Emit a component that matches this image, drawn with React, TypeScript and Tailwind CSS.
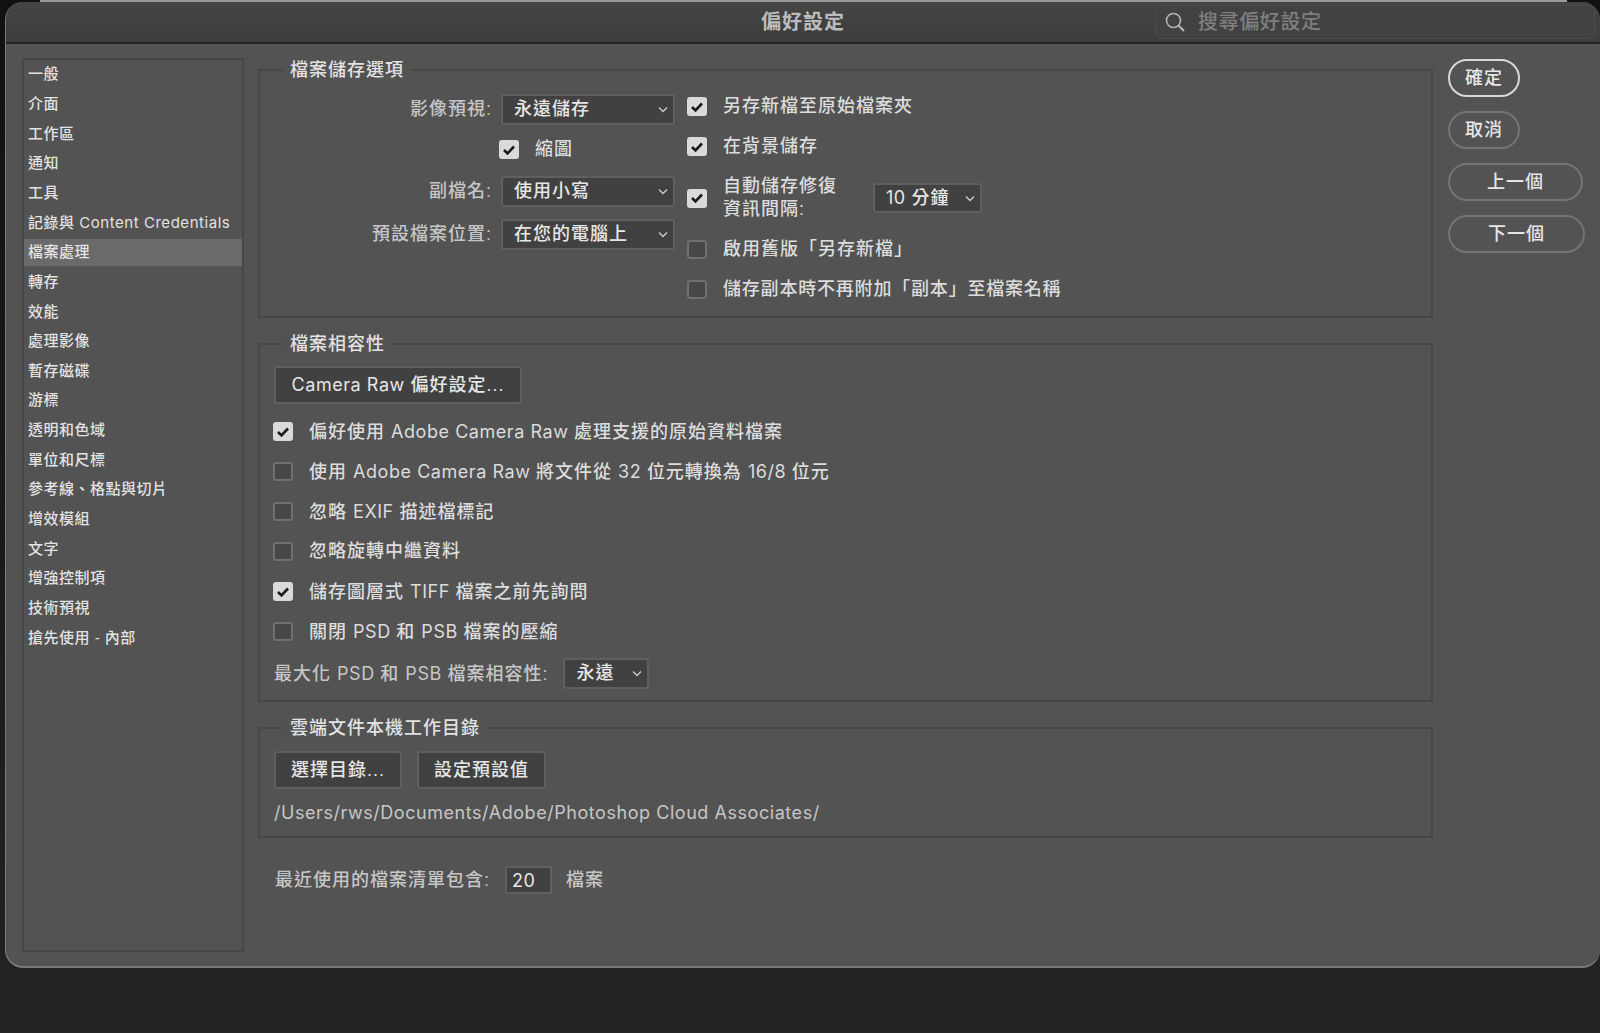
import React from 'react';

const font = { fontFamily: '"Liberation Sans", "Noto Sans CJK TC", sans-serif' };

const sidebarItems = [
  '一般', '介面', '工作區', '通知', '工具', '記錄與 Content Credentials', '檔案處理', '轉存', '效能', '處理影像',
  '暫存磁碟', '游標', '透明和色域', '單位和尺標', '參考線、格點與切片', '增效模組', '文字', '增強控制項', '技術預視', '搶先使用 - 內部',
];

const Mixed: React.FC<{ text: string }> = ({ text }) => (
  <>
    {text.split(/([A-Za-z0-9/][A-Za-z0-9/ .]*)/).map((part, i) =>
      i % 2 === 1 ? (
        <span key={i} className="font-['Inter'] font-normal tracking-[0.55px]">
          {part}
        </span>
      ) : (
        part
      ),
    )}
  </>
);

const Chevron: React.FC = () => (
  <svg width="10" height="7" viewBox="0 0 10 7" className="shrink-0" fill="none">
    <path d="M1 1.5 L5 5.5 L9 1.5" stroke="#cfcfcf" strokeWidth="1.3" />
  </svg>
);

const Check: React.FC<{ checked?: boolean }> = ({ checked }) =>
  checked ? (
    <span className="flex h-[19px] w-[20px] shrink-0 items-center justify-center rounded-[3px] bg-[#dadada]">
      <svg width="14" height="12" viewBox="0 0 14 12" fill="none">
        <path d="M2 6 L5.5 9.5 L12 2.5" stroke="#1c1c1c" strokeWidth="2.6" />
      </svg>
    </span>
  ) : (
    <span className="block h-[19px] w-[20px] shrink-0 rounded-[3px] border-2 border-[#6f6f6f] bg-[#474747]" />
  );

const CheckRow: React.FC<{ checked?: boolean; label: string; className?: string }> = ({ checked, label, className }) => (
  <div className={`flex h-[19px] items-center gap-[16px] ${className ?? ''}`}>
    <Check checked={checked} />
    <span className="whitespace-nowrap text-[#dcdcdc]">
      <Mixed text={label} />
    </span>
  </div>
);

const Select: React.FC<{ value: string; className: string }> = ({ value, className }) => (
  <div className={`flex items-center justify-between rounded-[3px] border-2 border-[#5f5f5f] bg-[#414141] pl-[11px] pr-[5px] text-[#e6e6e6] ${className}`}>
    <span className="whitespace-nowrap">
      <Mixed text={value} />
    </span>
    <Chevron />
  </div>
);

const Button: React.FC<{ label: string; className: string }> = ({ label, className }) => (
  <div className={`flex h-[38px] items-center justify-center rounded-[3px] border-2 border-[#5f5f5f] bg-[#414141] text-[#e6e6e6] whitespace-nowrap ${className}`}>
    <span>
      <Mixed text={label} />
    </span>
  </div>
);

const Group: React.FC<{ title: string; className: string; children: React.ReactNode }> = ({ title, className, children }) => (
  <fieldset className={`border-2 border-[#474747] ${className}`}>
    <legend className="ml-[23px] h-[24px] px-[7px] leading-[24px] text-[#e2e2e2]">{title}</legend>
    {children}
  </fieldset>
);

const LabelRow: React.FC<{ label: string; value: string; className?: string }> = ({ label, value, className }) => (
  <div className={`flex items-center justify-end gap-[9px] ${className ?? ''}`}>
    <span className="whitespace-nowrap text-[#c6c6c6]">{label}</span>
    <Select value={value} className="h-[31px] w-[174px]" />
  </div>
);

const SideButton: React.FC<{ label: string; primary?: boolean; className: string }> = ({ label, primary, className }) => (
  <div
    className={`flex h-[38px] items-center justify-center rounded-full border-2 text-[#e6e6e6] ${
      primary ? 'border-[#d8d8d8]' : 'border-[#747474]'
    } ${className}`}
  >
    {label}
  </div>
);

export default function App() {
  return (
    <div className="h-[1033px] w-[1600px] overflow-hidden bg-gradient-to-b from-[#111111] to-[#232323] text-[18px] font-medium tracking-[1px]" style={font}>
      <div className="ml-[40px] h-[2px] w-[1527px] bg-[#9a9a9a]" />
      <div className="ml-[5px] h-[966px] w-[1595px] overflow-hidden rounded-[18px] border-b-2 border-l border-[#7a7a7a] bg-[#535353]">
        {/* title bar */}
        <div className="grid h-[42px] grid-cols-[1fr_auto_1fr] items-center border-b-2 border-[#242424] bg-gradient-to-b from-[#454545] to-[#3d3d3d]">
          <div />
          <div className="text-[20px] font-bold text-[#bcbcbc]">偏好設定</div>
          <div className="mr-[5px] flex h-[34px] w-[440px] items-center gap-[12px] justify-self-end rounded-[6px] border border-[#4c4c4c] bg-[#424242] pl-[8px] text-[20px] tracking-[0.6px] text-[#7f7f7f]">
            <svg width="22" height="22" viewBox="0 0 22 22" fill="none" className="shrink-0">
              <circle cx="9.5" cy="9.5" r="7" stroke="#b5b5b5" strokeWidth="1.6" />
              <path d="M14.5 14.5 L20 20" stroke="#b5b5b5" strokeWidth="2" />
            </svg>
            <span>搜尋偏好設定</span>
          </div>
        </div>

        <div className="flex pl-[16px] pt-[14px]">
          {/* sidebar */}
          <div className="h-[894px] w-[222px] shrink-0 border-2 border-[#474747] pt-[1px] text-[15px] tracking-[0.5px] text-[#e2e2e2]">
            {sidebarItems.map((item) => (
              <div
                key={item}
                className={`mb-[2.67px] flex h-[27px] items-center whitespace-pre pl-[4px] ${item === '檔案處理' ? 'bg-[#6a6a6a]' : ''}`}
              >
                <span>
                  <Mixed text={item} />
                </span>
              </div>
            ))}
          </div>

          {/* settings */}
          <div className="ml-[14px] w-[1175px] shrink-0">
            <Group title="檔案儲存選項" className="h-[260px]">
              <div className="flex pt-[12px]">
                <div className="w-[415px] shrink-0">
                  <LabelRow label="影像預視:" value="永遠儲存" />
                  <div className="ml-[239px] mt-[15px]">
                    <CheckRow checked label="縮圖" />
                  </div>
                  <LabelRow label="副檔名:" value="使用小寫" className="mt-[17px]" />
                  <LabelRow label="預設檔案位置:" value="在您的電腦上" className="mt-[12px]" />
                </div>
                <div className="ml-[12px] pt-[3px]">
                  <CheckRow checked label="另存新檔至原始檔案夾" />
                  <CheckRow checked label="在背景儲存" className="mt-[21px]" />
                  <div className="mt-[19px] flex h-[46px] items-center">
                    <Check checked />
                    <div className="ml-[16px] w-[150px] leading-[23px] text-[#dcdcdc]">
                      自動儲存修復
                      <br />
                      資訊間隔:
                    </div>
                    <Select value="10 分鐘" className="h-[30px] w-[109px]" />
                  </div>
                  <CheckRow label="啟用舊版「另存新檔」" className="mt-[19px]" />
                  <CheckRow label="儲存副本時不再附加「副本」至檔案名稱" className="mt-[21px] tracking-[0.8px]" />
                </div>
              </div>
            </Group>

            <Group title="檔案相容性" className="mt-[14px] h-[370px]">
              <div className="pl-[14px] pt-[10px]">
                <Button label="Camera Raw 偏好設定..." className="w-[248px]" />
                <div className="-ml-[1px]">
                  <CheckRow checked label="偏好使用 Adobe Camera Raw 處理支援的原始資料檔案" className="mt-[18px]" />
                  <CheckRow label="使用 Adobe Camera Raw 將文件從 32 位元轉換為 16/8 位元" className="mt-[21px]" />
                  <CheckRow label="忽略 EXIF 描述檔標記" className="mt-[21px]" />
                  <CheckRow label="忽略旋轉中繼資料" className="mt-[21px]" />
                  <CheckRow checked label="儲存圖層式 TIFF 檔案之前先詢問" className="mt-[21px]" />
                  <CheckRow label="關閉 PSD 和 PSB 檔案的壓縮" className="mt-[21px]" />
                </div>
                <div className="mt-[17px] flex items-center gap-[15px]">
                  <span className="text-[#c6c6c6]">
                    <Mixed text="最大化 PSD 和 PSB 檔案相容性:" />
                  </span>
                  <Select value="永遠" className="h-[31px] w-[86px]" />
                </div>
              </div>
            </Group>

            <Group title="雲端文件本機工作目錄" className="mt-[14px] h-[122px]">
              <div className="pl-[14px] pt-[11px]">
                <div className="flex gap-[15px]">
                  <Button label="選擇目錄..." className="w-[128px]" />
                  <Button label="設定預設值" className="w-[129px]" />
                </div>
                <div className="mt-[11px] leading-[26px] text-[#c6c6c6]">
                  <Mixed text="/Users/rws/Documents/Adobe/Photoshop Cloud Associates/" />
                </div>
              </div>
            </Group>

            <div className="ml-[17px] mt-[28px] flex items-center">
              <span className="w-[230px] whitespace-nowrap text-[#c6c6c6]">最近使用的檔案清單包含:</span>
              <div className="flex h-[28px] w-[47px] items-center border-2 border-[#5f5f5f] bg-[#414141] pl-[5px] text-[#e6e6e6]">
                <Mixed text="20" />
              </div>
              <span className="ml-[14px] text-[#c6c6c6]">檔案</span>
            </div>
          </div>

          {/* action buttons */}
          <div className="ml-[15px] flex shrink-0 flex-col items-start gap-[14px] pt-[1px]">
            <SideButton primary label="確定" className="w-[72px]" />
            <SideButton label="取消" className="w-[72px]" />
            <SideButton label="上一個" className="w-[135px]" />
            <SideButton label="下一個" className="w-[137px]" />
          </div>
        </div>
      </div>
    </div>
  );
}
